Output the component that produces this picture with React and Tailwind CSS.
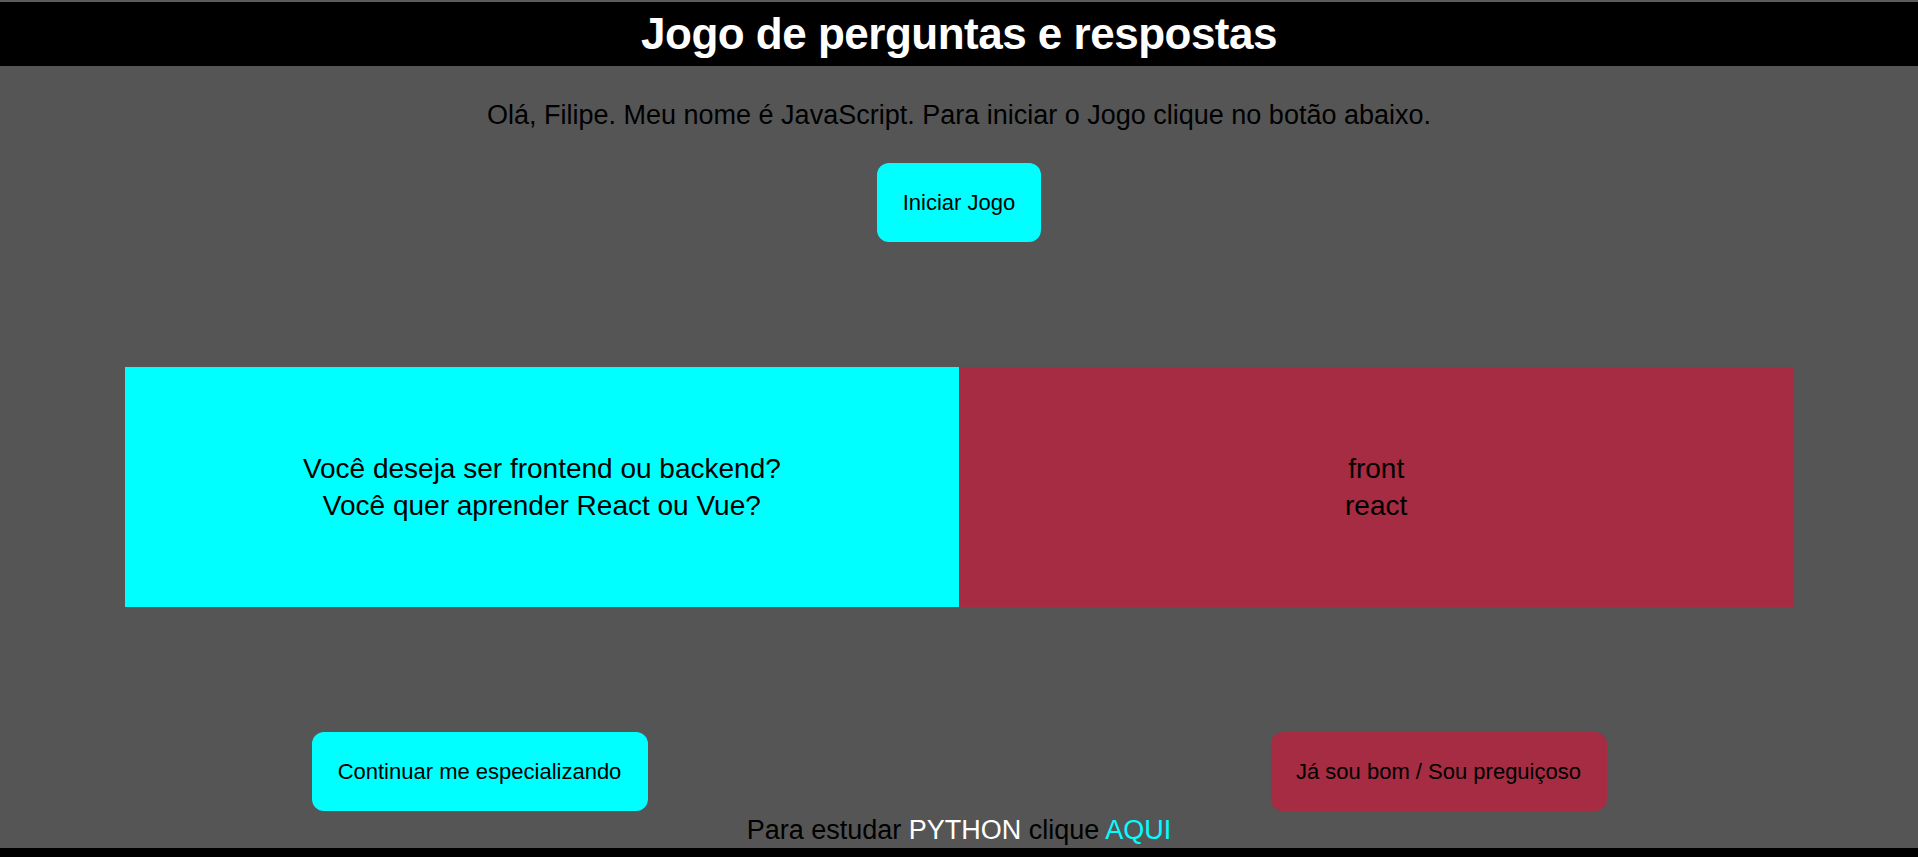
import React from 'react';

const font = { fontFamily: '"Liberation Sans", Arial, sans-serif' };

export default function App() {
  return (
    <div className="h-[857px] flex flex-col bg-black overflow-hidden" style={font}>
      <div className="h-[2px] bg-[#5c5c5c]" />
      <header className="h-[64px] bg-black flex items-center justify-center">
        <h1 className="text-white font-bold text-[44px] leading-none tracking-[-0.5px]">
          Jogo de perguntas e respostas
        </h1>
      </header>

      <main className="flex-1 bg-[#555555] flex flex-col items-center">
        <p className="mt-[33px] h-[32px] leading-[32px] text-[27px] text-black">
          Olá, Filipe. Meu nome é JavaScript. Para iniciar o Jogo clique no botão abaixo.
        </p>

        <button className="mt-[32px] w-[164px] h-[79px] rounded-xl bg-[#00ffff] text-black text-[22px]">
          Iniciar Jogo
        </button>

        {/* quadro com perguntas e respostas */}
        <div className="mt-[125px] w-[87%] h-[240px] flex">
          <div className="w-1/2 bg-[#00ffff] flex flex-col items-center justify-center text-[28px] leading-[37px] text-black">
            <span>Você deseja ser frontend ou backend?</span>
            <span>Você quer aprender React ou Vue?</span>
          </div>
          <div className="w-1/2 bg-[#a52c42] flex flex-col items-center justify-center text-[28px] leading-[37px] text-black">
            <span>front</span>
            <span>react</span>
          </div>
        </div>

        <div className="mt-[125px] w-full flex justify-around">
          <button className="w-[336px] h-[79px] rounded-xl bg-[#00ffff] text-black text-[22px]">
            Continuar me especializando
          </button>
          <button className="w-[336px] h-[79px] rounded-xl bg-[#a52c42] text-black text-[22px]">
            Já sou bom / Sou preguiçoso
          </button>
        </div>

        <p className="mt-[3px] h-[32px] leading-[32px] text-[27px] text-black">
          Para estudar <span className="text-white">PYTHON</span> clique{' '}
          <a className="text-[#00ffff] cursor-pointer">AQUI</a>
        </p>
      </main>

      <div className="h-[9px] bg-black" />
    </div>
  );
}
